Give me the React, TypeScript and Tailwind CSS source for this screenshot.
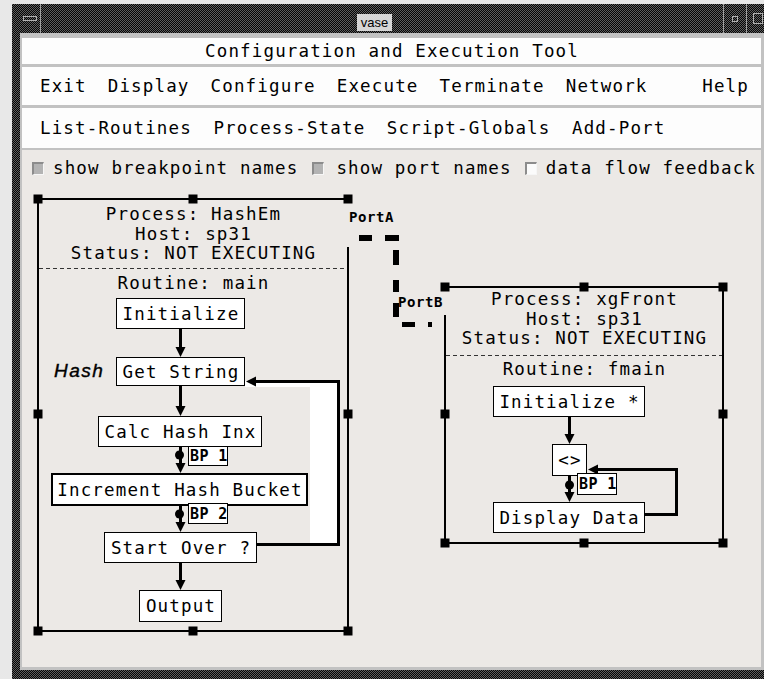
import React from "react";

const MONO = "font-['DejaVu_Sans_Mono',monospace] text-[17.5px] tracking-[1.15px] leading-[20px] text-black";

function Box({ cls, label, thick }: { cls: string; label: string; thick?: boolean }) {
  return (
    <div
      className={`absolute flex items-center justify-center bg-white pl-[1px] ${thick ? "border-2" : "border"} border-black ${cls}`}
    >
      <span className="font-['DejaVu_Sans_Mono',monospace] text-[17.5px] tracking-[1.15px] leading-[20px] text-black whitespace-pre">
        {label}
      </span>
    </div>
  );
}

function BP({ cls, label }: { cls: string; label: string }) {
  return (
    <div className={`absolute bg-white border border-black flex items-center pl-[1px] ${cls}`}>
      <span className="font-['DejaVu_Sans_Mono',monospace] font-bold text-[15px] leading-[18px] tracking-[0.4px] text-black whitespace-pre">
        {label}
      </span>
    </div>
  );
}

function Check({ on }: { on: boolean }) {
  return (
    <div
      className={`w-[12px] h-[13px] border-t-2 border-l-2 border-b border-r border-t-[#8c8c8c] border-l-[#8c8c8c] border-b-[#f6f6f6] border-r-[#f6f6f6] ${
        on ? "bg-[#b3b3b3]" : "bg-[#fbfbfb]"
      }`}
    />
  );
}

function Header({ cls, text }: { cls: string; text: string }) {
  return (
    <div className={`absolute text-center pl-[1px] whitespace-pre ${MONO} ${cls}`}>{text}</div>
  );
}

function Handles({ pts }: { pts: [number, number][] }) {
  return (
    <>
      {pts.map(([x, y], i) => (
        <rect key={i} x={x - 4.5} y={y - 4.5} width={9} height={9} fill="#000" />
      ))}
    </>
  );
}

function Arrow({ x, y1, tip }: { x: number; y1: number; tip: number }) {
  return (
    <>
      <line x1={x} x2={x} y1={y1} y2={tip - 8} stroke="#000" strokeWidth={3} />
      <polygon points={`${x - 5},${tip - 10} ${x + 5},${tip - 10} ${x},${tip}`} fill="#000" />
    </>
  );
}

export default function App() {
  return (
    <div className="w-[764px] h-[679px] overflow-hidden bg-[#e8e8e8] pl-[12px] pt-[4px]">
      <div className="w-[780px] h-[690px] flex flex-col bg-[image:repeating-conic-gradient(#050505_0%_25%,#5e5e5e_0%_50%)] bg-[length:2px_2px]">
        {/* title bar */}
        <div className="h-[29px] flex pl-[8px]">
          <div className="w-[21px] border-r border-[#a0a0a0] flex items-center justify-center">
            <div className="w-[14px] h-[5px] border border-[#b0b0b0]" />
          </div>
          <div className="w-[682px] flex items-start">
            <div className="ml-[316px] mt-[10px] w-[35px] h-[17px] bg-[#d6d6d6] flex items-center justify-center font-['Liberation_Sans',sans-serif] text-[13px] leading-[15px] text-black">
              vase
            </div>
          </div>
          <div className="w-[23px] border-l border-[#a0a0a0] flex items-center justify-center">
            <div className="w-[6px] h-[6px] border border-[#b0b0b0]" />
          </div>
          <div className="w-[23px] border-l border-[#a0a0a0] flex items-center justify-center">
            <div className="w-[10px] h-[11px] border border-[#b0b0b0]" />
          </div>
        </div>

        {/* content panel */}
        <div className="ml-[8px] w-[744px] bg-[#c2c2c2] pt-[5px] pl-[2px] pr-[3px] pb-[3px] flex flex-col">
          <div className={`h-[26px] bg-[#fdfdfd] flex items-center justify-center pl-[1px] ${MONO}`}>
            Configuration and Execution Tool
          </div>
          <div className="h-[3px]" />
          <div className={`h-[38px] bg-[#fdfdfd] flex items-center pl-[18px] pr-[12px] gap-[21px] ${MONO}`}>
            <span>Exit</span>
            <span>Display</span>
            <span>Configure</span>
            <span>Execute</span>
            <span>Terminate</span>
            <span>Network</span>
            <span className="ml-auto">Help</span>
          </div>
          <div className="h-[3px]" />
          <div className={`h-[40px] bg-[#fdfdfd] flex items-center pl-[18px] gap-[21.5px] ${MONO}`}>
            <span>List-Routines</span>
            <span>Process-State</span>
            <span>Script-Globals</span>
            <span>Add-Port</span>
          </div>
          <div className="h-[2px]" />

          {/* canvas */}
          <div className="relative h-[517px] bg-[#ece9e6]">
            <div className={`h-[36px] flex items-center ${MONO}`}>
              <div className="ml-[10px]">
                <Check on />
              </div>
              <span className="ml-[9px]">show breakpoint names</span>
              <div className="ml-[14px]">
                <Check on />
              </div>
              <span className="ml-[12px]">show port names</span>
              <div className="ml-[13px]">
                <Check on={false} />
              </div>
              <span className="ml-[9px]">data flow feedback</span>
            </div>

            <svg
              className="absolute left-0 top-0"
              width={739}
              height={517}
              viewBox="22 150 739 517"
            >
              {/* white strip behind loop */}
              <rect x={310} y={381} width={28} height={164} fill="#ffffff" />
              <rect x={245} y={381} width={93} height={6} fill="#ffffff" />

              {/* left process box */}
              <rect x={37} y={198} width={312} height={2} fill="#000" />
              <rect x={37} y={198} width={2} height={434} fill="#000" />
              <rect x={347} y={247} width={2} height={385} fill="#000" />
              <rect x={37} y={630} width={312} height={2} fill="#000" />
              <line x1={39} x2={347} y1={268.5} y2={268.5} stroke="#333" strokeWidth={1} strokeDasharray="4 3" />
              <Handles
                pts={[
                  [38, 199],
                  [193, 199],
                  [348, 199],
                  [38, 414],
                  [348, 414],
                  [38, 631],
                  [193, 631],
                  [348, 631],
                ]}
              />

              {/* right process box */}
              <rect x={444} y={286} width={280} height={2} fill="#000" />
              <rect x={444} y={315} width={2} height={229} fill="#000" />
              <rect x={722} y={286} width={2} height={258} fill="#000" />
              <rect x={444} y={542} width={280} height={2} fill="#000" />
              <line x1={446} x2={722} y1={355.5} y2={355.5} stroke="#333" strokeWidth={1} strokeDasharray="4 3" />
              <Handles
                pts={[
                  [445, 287],
                  [584, 287],
                  [723, 287],
                  [445, 414],
                  [723, 414],
                  [445, 543],
                  [584, 543],
                  [723, 543],
                ]}
              />

              {/* left flow arrows */}
              <Arrow x={180.5} y1={329} tip={357} />
              <Arrow x={180.5} y1={386} tip={416} />
              <Arrow x={180.5} y1={447} tip={473} />
              <Arrow x={180.5} y1={506} tip={532} />
              <Arrow x={180.5} y1={563} tip={590} />
              <polyline
                points="257,544.5 338.5,544.5 338.5,381.5 254,381.5"
                fill="none"
                stroke="#000"
                strokeWidth={3}
              />
              <polygon points="246,381.5 256,376.5 256,386.5" fill="#000" />
              <circle cx={179.5} cy={455} r={4.5} fill="#000" />
              <circle cx={179.5} cy={514} r={4.5} fill="#000" />

              {/* right flow arrows */}
              <Arrow x={569.5} y1={417} tip={444} />
              <Arrow x={569.5} y1={476} tip={502} />
              <polyline
                points="645,514.5 676.5,514.5 676.5,469.5 596,469.5"
                fill="none"
                stroke="#000"
                strokeWidth={3}
              />
              <polygon points="588,469.5 598,464.5 598,474.5" fill="#000" />
              <circle cx={569.5} cy={485} r={4.5} fill="#000" />

              {/* port connector */}
              <rect x={359} y={235} width={13} height={6} fill="#000" />
              <rect x={385} y={235} width={14} height={6} fill="#000" />
              <rect x={393} y={250} width={6} height={15} fill="#000" />
              <rect x={393} y={280} width={6} height={12} fill="#000" />
              <rect x={393} y={303} width={6} height={14} fill="#000" />
              <rect x={402} y={322} width={13} height={5} fill="#000" />
              <rect x={428} y={322} width={4} height={5} fill="#000" />
            </svg>

            {/* left process texts */}
            <Header cls="left-[16px] top-[54px] w-[310px]" text="Process: HashEm" />
            <Header cls="left-[16px] top-[74px] w-[310px]" text="Host: sp31" />
            <Header cls="left-[16px] top-[93px] w-[310px]" text="Status: NOT EXECUTING" />
            <Header cls="left-[16px] top-[123px] w-[310px]" text="Routine: main" />

            {/* right process texts */}
            <Header cls="left-[423px] top-[139px] w-[278px]" text="Process: xgFront" />
            <Header cls="left-[423px] top-[159px] w-[278px]" text="Host: sp31" />
            <Header cls="left-[423px] top-[178px] w-[278px]" text="Status: NOT EXECUTING" />
            <Header cls="left-[423px] top-[209px] w-[278px]" text="Routine: fmain" />

            {/* left flow boxes */}
            <Box cls="left-[94px] top-[148px] w-[129px] h-[31px]" label="Initialize" />
            <Box cls="left-[94px] top-[207px] w-[129px] h-[29px]" label="Get String" />
            <Box cls="left-[76px] top-[266px] w-[164px] h-[31px]" label="Calc Hash Inx" />
            <Box cls="left-[29px] top-[323px] w-[257px] h-[33px]" label="Increment Hash Bucket" thick />
            <Box cls="left-[82px] top-[382px] w-[153px] h-[31px]" label="Start Over ?" />
            <Box cls="left-[117px] top-[440px] w-[83px] h-[32px]" label="Output" />

            <div className="absolute left-[32px] top-[211px] font-['Liberation_Sans',sans-serif] italic text-[19px] leading-[20px] tracking-[1.5px] text-black [-webkit-text-stroke:0.4px_black]">
              Hash
            </div>

            <BP cls="left-[166px] top-[296px] w-[40px] h-[20px]" label="BP 1" />
            <BP cls="left-[166px] top-[353px] w-[40px] h-[21px]" label="BP 2" />

            {/* right flow boxes */}
            <Box cls="left-[471px] top-[236px] w-[152px] h-[31px]" label="Initialize *" />
            <Box cls="left-[530px] top-[294px] w-[35px] h-[32px]" label="<>" />
            <Box cls="left-[471px] top-[352px] w-[152px] h-[31px]" label="Display Data" />
            <BP cls="left-[555px] top-[323px] w-[40px] h-[22px]" label="BP 1" />

            {/* port labels */}
            <div className="absolute left-[327px] top-[59px] font-['DejaVu_Sans_Mono',monospace] font-bold text-[14px] leading-[16px] tracking-[0.6px] text-black">
              PortA
            </div>
            <div className="absolute left-[376px] top-[144px] font-['DejaVu_Sans_Mono',monospace] font-bold text-[14px] leading-[16px] tracking-[0.6px] text-black">
              PortB
            </div>
          </div>
        </div>
      </div>
    </div>
  );
}
